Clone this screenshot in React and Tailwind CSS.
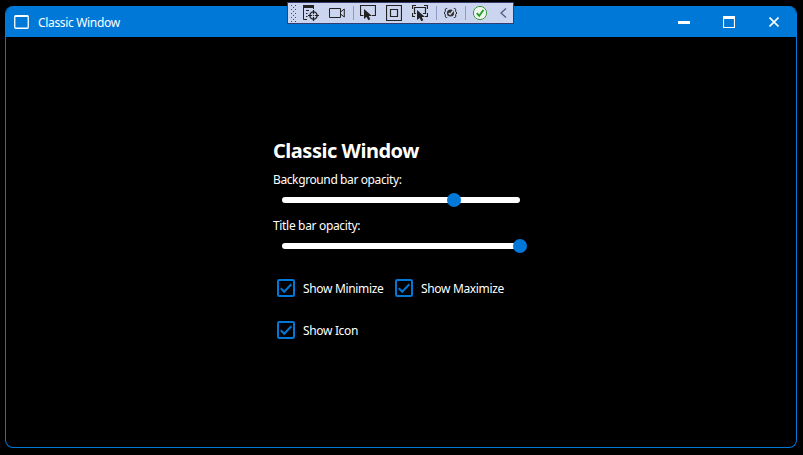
import React from "react";

const FONT = "font-['Noto_Sans','Open_Sans',sans-serif]";

function Grip() {
  const dots = [];
  for (let r = 0; r < 5; r++) {
    dots.push(<rect key={`a${r}`} x="0" y={r * 4} width="1" height="1" />);
    dots.push(<rect key={`b${r}`} x="4" y={r * 4} width="1" height="1" />);
    if (r < 4) dots.push(<rect key={`c${r}`} x="2" y={r * 4 + 2} width="1" height="1" />);
  }
  return (
    <svg width="6" height="17" className="ml-[3px] shrink-0" fill="#3d4677" shapeRendering="crispEdges">
      {dots}
    </svg>
  );
}

function Icon({ className = "", children }) {
  return (
    <svg width="16" height="16" viewBox="0 0 16 16" fill="none" stroke="#222225" className={`shrink-0 ${className}`}>
      {children}
    </svg>
  );
}

function Cursor({ x, y }) {
  return (
    <path
      transform={`translate(${x} ${y})`}
      d="M0 0V10L2.6 7.9L4.3 11.2L6.3 10.2L4.8 7H8Z"
      fill="#222225"
      stroke="none"
    />
  );
}

function Separator({ className = "" }) {
  return <div className={`h-[14px] w-px shrink-0 bg-[#8e9bc9] ${className}`} />;
}

function DebugToolbar() {
  return (
    <div className="absolute left-[287px] top-[2px] flex h-[22px] w-[227px] items-center border border-[#343c70] bg-[#ccd5f0]">
      <Grip />
      <Icon className="ml-[6px]">
        <path d="M0 1.5H11" strokeWidth="3" />
        <path d="M.5 3V14.5H4M3 5.5H6M3 8.5H4.5M3 11.5H4.5M10.5 3V4" />
        <circle cx="10.5" cy="10.5" r="3.6" strokeWidth="1.4" />
        <path d="M10.5 5V9M10.5 12V16M5 10.5H9M12 10.5H16" strokeWidth="1.2" />
        <circle cx="10.5" cy="10.5" r=".7" fill="#222225" stroke="none" />
      </Icon>
      <Icon className="ml-[10px]">
        <path d="M.5 3.5H11.5V12.5H.5ZM11.5 7L15.3 4V12L11.5 9" />
      </Icon>
      <Separator className="ml-[8px]" />
      <Icon className="ml-[6px]">
        <path d="M3.5 10.5H.5V.5H15.5V10.5H12" strokeWidth="1.2" />
        <Cursor x={4} y={4} />
      </Icon>
      <Icon className="ml-[10px]">
        <path d="M.5 .5H15.5V15.5H.5ZM4.5 4.5H11.5V11.5H4.5Z" strokeWidth="1.2" />
      </Icon>
      <Icon className="ml-[10px]">
        <path d="M.5 4V.5H4M12 .5H15.5V4M.5 8V11.5H3M13 11.5H15.5V8" strokeWidth="1.2" />
        <path d="M4 8.5H2.5V2.5H13.5V8.5H11" strokeWidth="1.2" />
        <Cursor x={5} y={5} />
      </Icon>
      <Separator className="ml-[8px]" />
      <Icon className="ml-[6px]">
        <path d="M4.2 3.5H3.3Q2.3 3.5 2.3 4.7V6.5L1.2 8L2.3 9.5V11.3Q2.3 12.5 3.3 12.5H4.2M10.8 3.5H11.7Q12.7 3.5 12.7 4.7V6.5L13.8 8L12.7 9.5V11.3Q12.7 12.5 11.7 12.5H10.8" />
        <circle cx="7.5" cy="8" r="3.6" fill="#333337" stroke="none" />
        <path d="M5.7 8L7.1 9.4L10.3 5.5" stroke="#e5e9f6" strokeWidth="1.2" />
      </Icon>
      <Separator className="ml-[6px]" />
      <Icon className="ml-[6px]">
        <circle cx="8" cy="8" r="6.6" fill="#eef7ec" stroke="#38983c" />
        <path d="M4.8 8.2L7.2 10.8L11.4 5" stroke="#279b2d" strokeWidth="1.8" />
      </Icon>
      <svg width="7" height="10" viewBox="0 0 7 10" fill="none" stroke="#525a86" strokeWidth="1.3" className="ml-[12px]">
        <path d="M6 .5L1 5L6 9.5" />
      </svg>
    </div>
  );
}

function TitleBar() {
  return (
    <header className="flex h-[31px] shrink-0 items-center bg-[#0078d7] pl-[8px] text-white">
      <svg width="15" height="14" viewBox="0 0 15 14" fill="none" stroke="#fff" className="mt-px">
        <rect x=".75" y=".75" width="13.5" height="12.5" rx="1" strokeWidth="1.3" />
        <path d="M1 1.2H14" strokeWidth="1.6" />
      </svg>
      <span className="ml-[9px] mt-[2px] whitespace-nowrap text-[12px] leading-[16px] tracking-[-0.33px]">
        Classic Window
      </span>
      <div className="ml-auto flex items-center pr-[17px]">
        <div className="mt-[2px] h-[3px] w-[12px] bg-white" />
        <svg width="12" height="12" viewBox="0 0 12 12" fill="none" stroke="#fff" className="ml-[33px]">
          <path d="M.5 2V11.5H11.5V2" strokeWidth="1.2" />
          <path d="M0 1.5H12" strokeWidth="3" />
        </svg>
        <svg width="10" height="10" viewBox="0 0 10 10" fill="none" stroke="#fff" strokeWidth="1.6" className="ml-[34px]">
          <path d="M.5 .5L9.5 9.5M9.5 .5L.5 9.5" />
        </svg>
      </div>
    </header>
  );
}

function Slider({ value }) {
  return (
    <div className="relative ml-[9px] h-[6px] w-[238px] rounded-full bg-white">
      <div
        className="absolute -top-[4px] h-[14px] w-[14px] -translate-x-1/2 rounded-full bg-[#0078d7]"
        style={{ left: `${value}px` }}
      />
    </div>
  );
}

function CheckBox({ children, className = "" }) {
  return (
    <div className={`flex h-[18px] items-center ${className}`}>
      <svg width="18" height="18" viewBox="0 0 18 18" fill="none" stroke="#0078d7" className="shrink-0">
        <rect x="1" y="1" width="16" height="16" rx="1.2" strokeWidth="2" />
        <path d="M3.8 9.3L7.2 12.7L14.3 5.3" strokeWidth="2" />
      </svg>
      <span className="ml-[8px] mt-[2px] whitespace-nowrap text-[12px] leading-[16px] tracking-[-0.34px]">{children}</span>
    </div>
  );
}

export default function App() {
  return (
    <div className={`relative h-[455px] w-[803px] overflow-hidden bg-black pl-[5px] pt-[6px] text-white ${FONT}`}>
      <div className="flex h-[442px] w-[792px] flex-col overflow-hidden rounded-[8px] border border-[#0078d7] border-t-0 bg-black">
        <TitleBar />
        <main className="ml-[267px] flex w-[260px] flex-col pt-[102px]">
          <h1 className="h-[24px] whitespace-nowrap text-[20px] font-bold leading-[24px] tracking-[-0.48px]">
            Classic Window
          </h1>
          <div className="mt-[9px] h-[16px] whitespace-nowrap text-[12px] leading-[16px] tracking-[-0.39px]">
            Background bar opacity:
          </div>
          <div className="mt-[9px]">
            <Slider value={172} />
          </div>
          <div className="mt-[15px] h-[16px] whitespace-nowrap text-[12px] leading-[16px] tracking-[-0.33px]">
            Title bar opacity:
          </div>
          <div className="mt-[9px]">
            <Slider value={238} />
          </div>
          <div className="ml-[4px] mt-[30px] grid grid-cols-[118px_auto] gap-y-[24px]">
            <CheckBox>Show Minimize</CheckBox>
            <CheckBox>Show Maximize</CheckBox>
            <CheckBox>Show Icon</CheckBox>
          </div>
        </main>
      </div>
      <DebugToolbar />
    </div>
  );
}
